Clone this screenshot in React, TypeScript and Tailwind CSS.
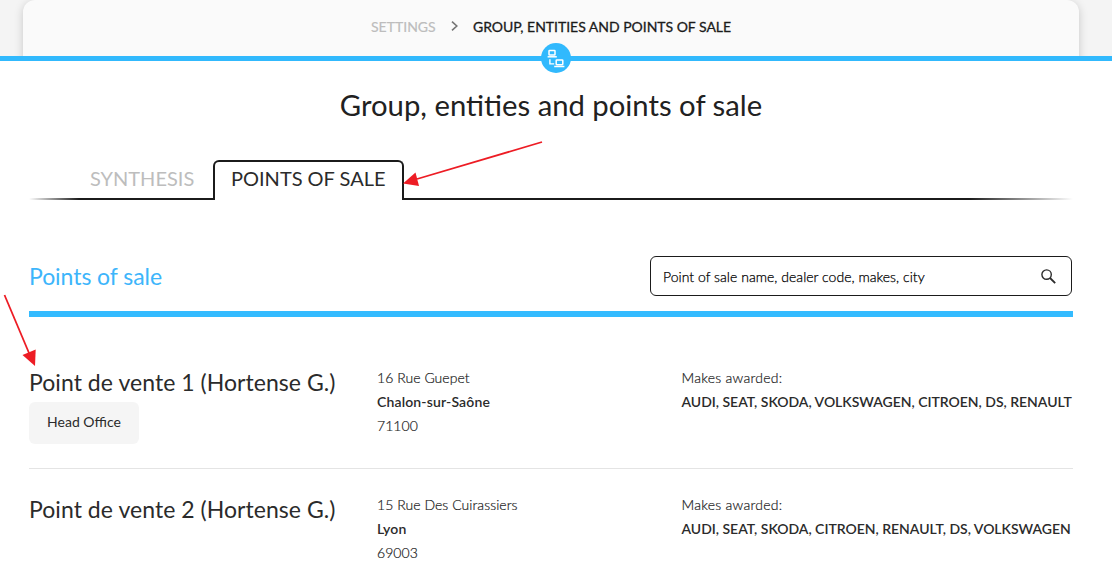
import React from "react";

type PointOfSale = {
  name: string;
  headOffice?: boolean;
  street: string;
  city: string;
  zip: string;
  makes: string;
};

const points: PointOfSale[] = [
  {
    name: "Point de vente 1 (Hortense G.)",
    headOffice: true,
    street: "16 Rue Guepet",
    city: "Chalon-sur-Saône",
    zip: "71100",
    makes: "AUDI, SEAT, SKODA, VOLKSWAGEN, CITROEN, DS, RENAULT",
  },
  {
    name: "Point de vente 2 (Hortense G.)",
    street: "15 Rue Des Cuirassiers",
    city: "Lyon",
    zip: "69003",
    makes: "AUDI, SEAT, SKODA, CITROEN, RENAULT, DS, VOLKSWAGEN",
  },
];

function NetworkIcon() {
  return (
    <svg width="18" height="20" viewBox="0 0 18 20" fill="none" stroke="#fff">
      <rect x="2" y="2.5" width="6" height="4.6" rx="0.6" strokeWidth="1.5" />
      <path d="M0.6 8.8H9.8" strokeWidth="1.5" />
      <rect x="9.2" y="11.9" width="6.6" height="4.8" rx="0.6" strokeWidth="1.5" />
      <path d="M7.2 18.5H17.4" strokeWidth="1.5" />
      <path d="M2.9 11.3V15.9H7.2" strokeWidth="1.4" />
    </svg>
  );
}

function Header() {
  return (
    <header className="relative">
      <div className="h-14 overflow-hidden bg-[#f4f4f4] pl-[23px] pr-[33px]">
        <div className="h-20 rounded-t-xl bg-[#fafafa] pt-[17px] shadow-[0_2px_10px_rgba(0,0,0,0.18)]">
          <nav className="flex items-center pl-[348px] text-[14px] leading-5">
            <span className="w-[80px] text-[#bdbdbd] [-webkit-text-stroke:0.2px_#bdbdbd]">SETTINGS</span>
            <svg className="mr-[15px] -mt-[3px]" width="7" height="10" viewBox="0 0 7 10" fill="none" stroke="#757575" strokeWidth="1.6">
              <path d="M1 0.6L5.8 5L1 9.4" />
            </svg>
            <span className="whitespace-nowrap tracking-[-0.02px] text-[#1b1b1b] [-webkit-text-stroke:0.3px_#1b1b1b]">
              GROUP, ENTITIES AND POINTS OF SALE
            </span>
          </nav>
        </div>
      </div>
      <div className="h-[5px] bg-[#31b9fd]" />
      <div className="absolute left-[541px] top-[43px] flex size-[30px] items-center justify-center rounded-full bg-[#31b9fd]">
        <NetworkIcon />
      </div>
    </header>
  );
}

function Tabs() {
  return (
    <div className="flex h-10 items-stretch text-[20px]">
      <div className="flex w-[185px] flex-col">
        <span className="h-[38px] pl-[61px] leading-[37px] text-[#bdbdbd]">SYNTHESIS</span>
        <span className="h-0.5 bg-linear-to-r from-transparent to-[#1b1b1b] to-[50px]" />
      </div>
      <div className="-ml-px w-[191px] rounded-t-md border-2 border-b-0 border-[#1b1b1b] pl-4 leading-[33px] whitespace-nowrap text-[#2b2b2b]">
        POINTS OF SALE
      </div>
      <div className="-ml-px mt-auto h-0.5 grow bg-linear-to-r from-[#1b1b1b] from-[calc(100%-104px)] to-transparent" />
    </div>
  );
}

function Row({ point }: { point: PointOfSale }) {
  return (
    <div className="flex h-[127px] pt-[24px] text-[14px] leading-6 text-[#2b2b2b]">
      <div className="w-[348px]">
        <h3 className="h-[36px] text-[23px] leading-[33px] tracking-[0.05px] whitespace-nowrap">{point.name}</h3>
        {point.headOffice && (
          <span className="inline-block h-[42px] w-[110px] rounded-md bg-[#f5f5f5] text-center leading-[40px]">
            Head Office
          </span>
        )}
      </div>
      <div className="w-[304.5px]">
        <p className="font-light tracking-[0.05px] text-[#1b1b1b] [-webkit-text-stroke:0.2px_#1b1b1b]">{point.street}</p>
        <p className="font-semibold tracking-[0.15px]">{point.city}</p>
        <p className="font-light tracking-[0.05px] text-[#1b1b1b] [-webkit-text-stroke:0.2px_#1b1b1b]">{point.zip}</p>
      </div>
      <div className="whitespace-nowrap">
        <p className="font-light tracking-[0.25px] text-[#1b1b1b] [-webkit-text-stroke:0.2px_#1b1b1b]">Makes awarded:</p>
        <p className="font-semibold tracking-[-0.02px]">{point.makes}</p>
      </div>
    </div>
  );
}

function Arrows() {
  return (
    <svg className="pointer-events-none absolute inset-0" width="1112" height="566" viewBox="0 0 1112 566" fill="#ed1c24" stroke="#ed1c24">
      <path d="M542 142L417 179" strokeWidth="1.8" />
      <path d="M403 183.5L415.5 172.5L419 186Z" stroke="none" />
      <path d="M4.5 295L29 353" strokeWidth="1.8" />
      <path d="M35 366L22.5 355L35.7 349.5Z" stroke="none" />
    </svg>
  );
}

export default function App() {
  return (
    <div className="relative h-[566px] w-[1112px] overflow-hidden bg-white font-['Lato',sans-serif] text-[#2b2b2b]">
      <Header />
      <main className="pl-[29px] pr-[39px]">
        <h1 className="pt-6 text-center text-[29.25px] leading-10 text-[#212121]">Group, entities and points of sale</h1>
        <div className="pt-[35px]">
          <Tabs />
        </div>
        <section className="mt-14">
          <div className="flex h-[55px] justify-between">
            <h2 className="text-[23px] leading-[41px] tracking-[-0.06px] text-[#3db5fb]">Points of sale</h2>
            <label className="mr-px flex h-10 w-[422px] items-center rounded-md border border-[#1b1b1b] pl-3 pr-[15px]">
              <input
                className="grow text-[14px] font-light tracking-[0.03px] outline-none placeholder:text-black placeholder:opacity-100 placeholder:[-webkit-text-stroke:0.25px_#000]"
                placeholder="Point of sale name, dealer code, makes, city"
              />
              <svg width="15" height="15" viewBox="0 0 15 15" fill="none" stroke="#2b2b2b" strokeWidth="1.4">
                <circle cx="5.6" cy="5.6" r="4.7" />
                <path d="M9 9L14.2 14.2" strokeWidth="1.8" />
              </svg>
            </label>
          </div>
          <div className="mb-[25px] h-1.5 bg-[#33bbff]" />
          <div className="divide-y divide-[#e4e4e4]">
            {points.map((p) => (
              <Row key={p.name} point={p} />
            ))}
          </div>
        </section>
      </main>
      <Arrows />
    </div>
  );
}
